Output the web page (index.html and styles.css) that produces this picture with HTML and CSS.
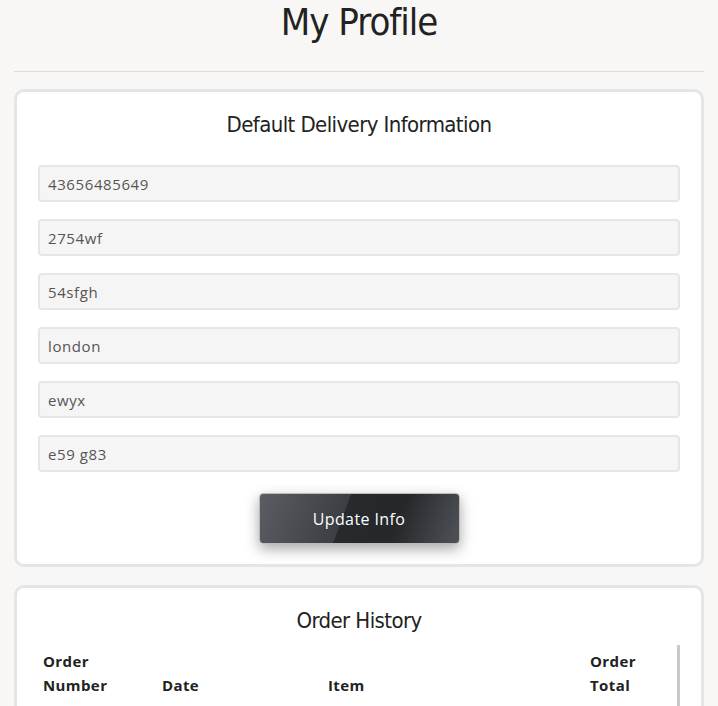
FILE: index.html
```html
<!DOCTYPE html>
<html lang="en">
<head>
<meta charset="utf-8">
<title>My Profile</title>
<link rel="stylesheet" href="styles.css">
</head>
<body>
<h1 class="page-title">My Profile</h1>
<hr class="divider">
<main class="content">
  <section class="card">
    <h2 class="card-title">Default Delivery Information</h2>
    <form class="delivery-form">
      <input class="field" type="text" value="43656485649">
      <input class="field" type="text" value="2754wf">
      <input class="field" type="text" value="54sfgh">
      <input class="field" type="text" value="london">
      <input class="field" type="text" value="ewyx">
      <input class="field" type="text" value="e59 g83">
      <button class="btn-update" type="button">Update Info</button>
    </form>
  </section>
  <section class="card">
    <h2 class="card-title">Order History</h2>
    <div class="orders">
      <div class="orders-head">
        <div class="col">Order<br>Number</div>
        <div class="col">Date</div>
        <div class="col">Item</div>
        <div class="col">Order<br>Total</div>
      </div>
    </div>
  </section>
</main>
</body>
</html>
```
FILE: styles.css
```css
html, body {
  margin: 0;
  padding: 0;
}
body {
  background: #f8f7f5;
  color: #222;
  font-family: "Open Sans", "DejaVu Sans", sans-serif;
}
.page-title {
  margin: 0;
  height: 44px;
  font-family: "DejaVu Sans Condensed", "DejaVu Sans", sans-serif;
  font-stretch: condensed;
  font-weight: 400;
  font-size: 38px;
  letter-spacing: -1px;
  line-height: 44px;
  text-align: center;
  color: #222;
}
.divider {
  margin: 27px 14px 0;
  border: 0;
  border-top: 1px solid #dedcda;
  height: 0;
}
.content {
  padding: 17px 14px 20px;
  display: flex;
  flex-direction: column;
  gap: 18px;
}
.card {
  background: #fff;
  border: 3px solid #e5e5e5;
  border-radius: 10px;
  padding: 20px 21px 20px;
}
.card-title {
  margin: 0;
  font-family: "DejaVu Sans Condensed", "DejaVu Sans", sans-serif;
  font-stretch: condensed;
  font-weight: 400;
  font-size: 22px;
  letter-spacing: -0.6px;
  line-height: 26px;
  text-align: center;
  color: #222;
}
.delivery-form {
  margin-top: 27px;
  display: flex;
  flex-direction: column;
  gap: 17px;
}
.field {
  box-sizing: border-box;
  height: 37px;
  width: 100%;
  margin: 0;
  padding: 0 8px;
  background: #f5f5f5;
  border: 2px solid #e6e6e6;
  border-radius: 4px;
  font-family: "Open Sans", "DejaVu Sans", sans-serif;
  font-size: 15px;
  letter-spacing: 0.6px;
  color: #555;
}
.btn-update {
  align-self: center;
  margin-top: 4px;
  width: 201px;
  height: 51px;
  border: 1px solid #b9bbbd;
  border-radius: 4px;
  background: linear-gradient(110deg, #5a5e62 0%, #3b3e42 42%, #272a2d 42%, #25282b 68%, #4f5357 100%);
  box-shadow: 0 5px 14px rgba(0, 0, 0, 0.35);
  color: #fff;
  font-family: "Open Sans", "DejaVu Sans", sans-serif;
  font-size: 16px;
  letter-spacing: 0.4px;
}
.orders {
  margin-top: 11px;
  border-right: 3px solid #c9c9c9;
  height: 80px;
}
.orders-head {
  display: grid;
  grid-template-columns: 119px 166px 262px 1fr;
  align-items: end;
  padding: 4px 0 0 5px;
  font-family: "Open Sans", "DejaVu Sans", sans-serif;
  font-weight: 700;
  font-size: 15px;
  letter-spacing: 0.4px;
  line-height: 24px;
  color: #222;
}
```
